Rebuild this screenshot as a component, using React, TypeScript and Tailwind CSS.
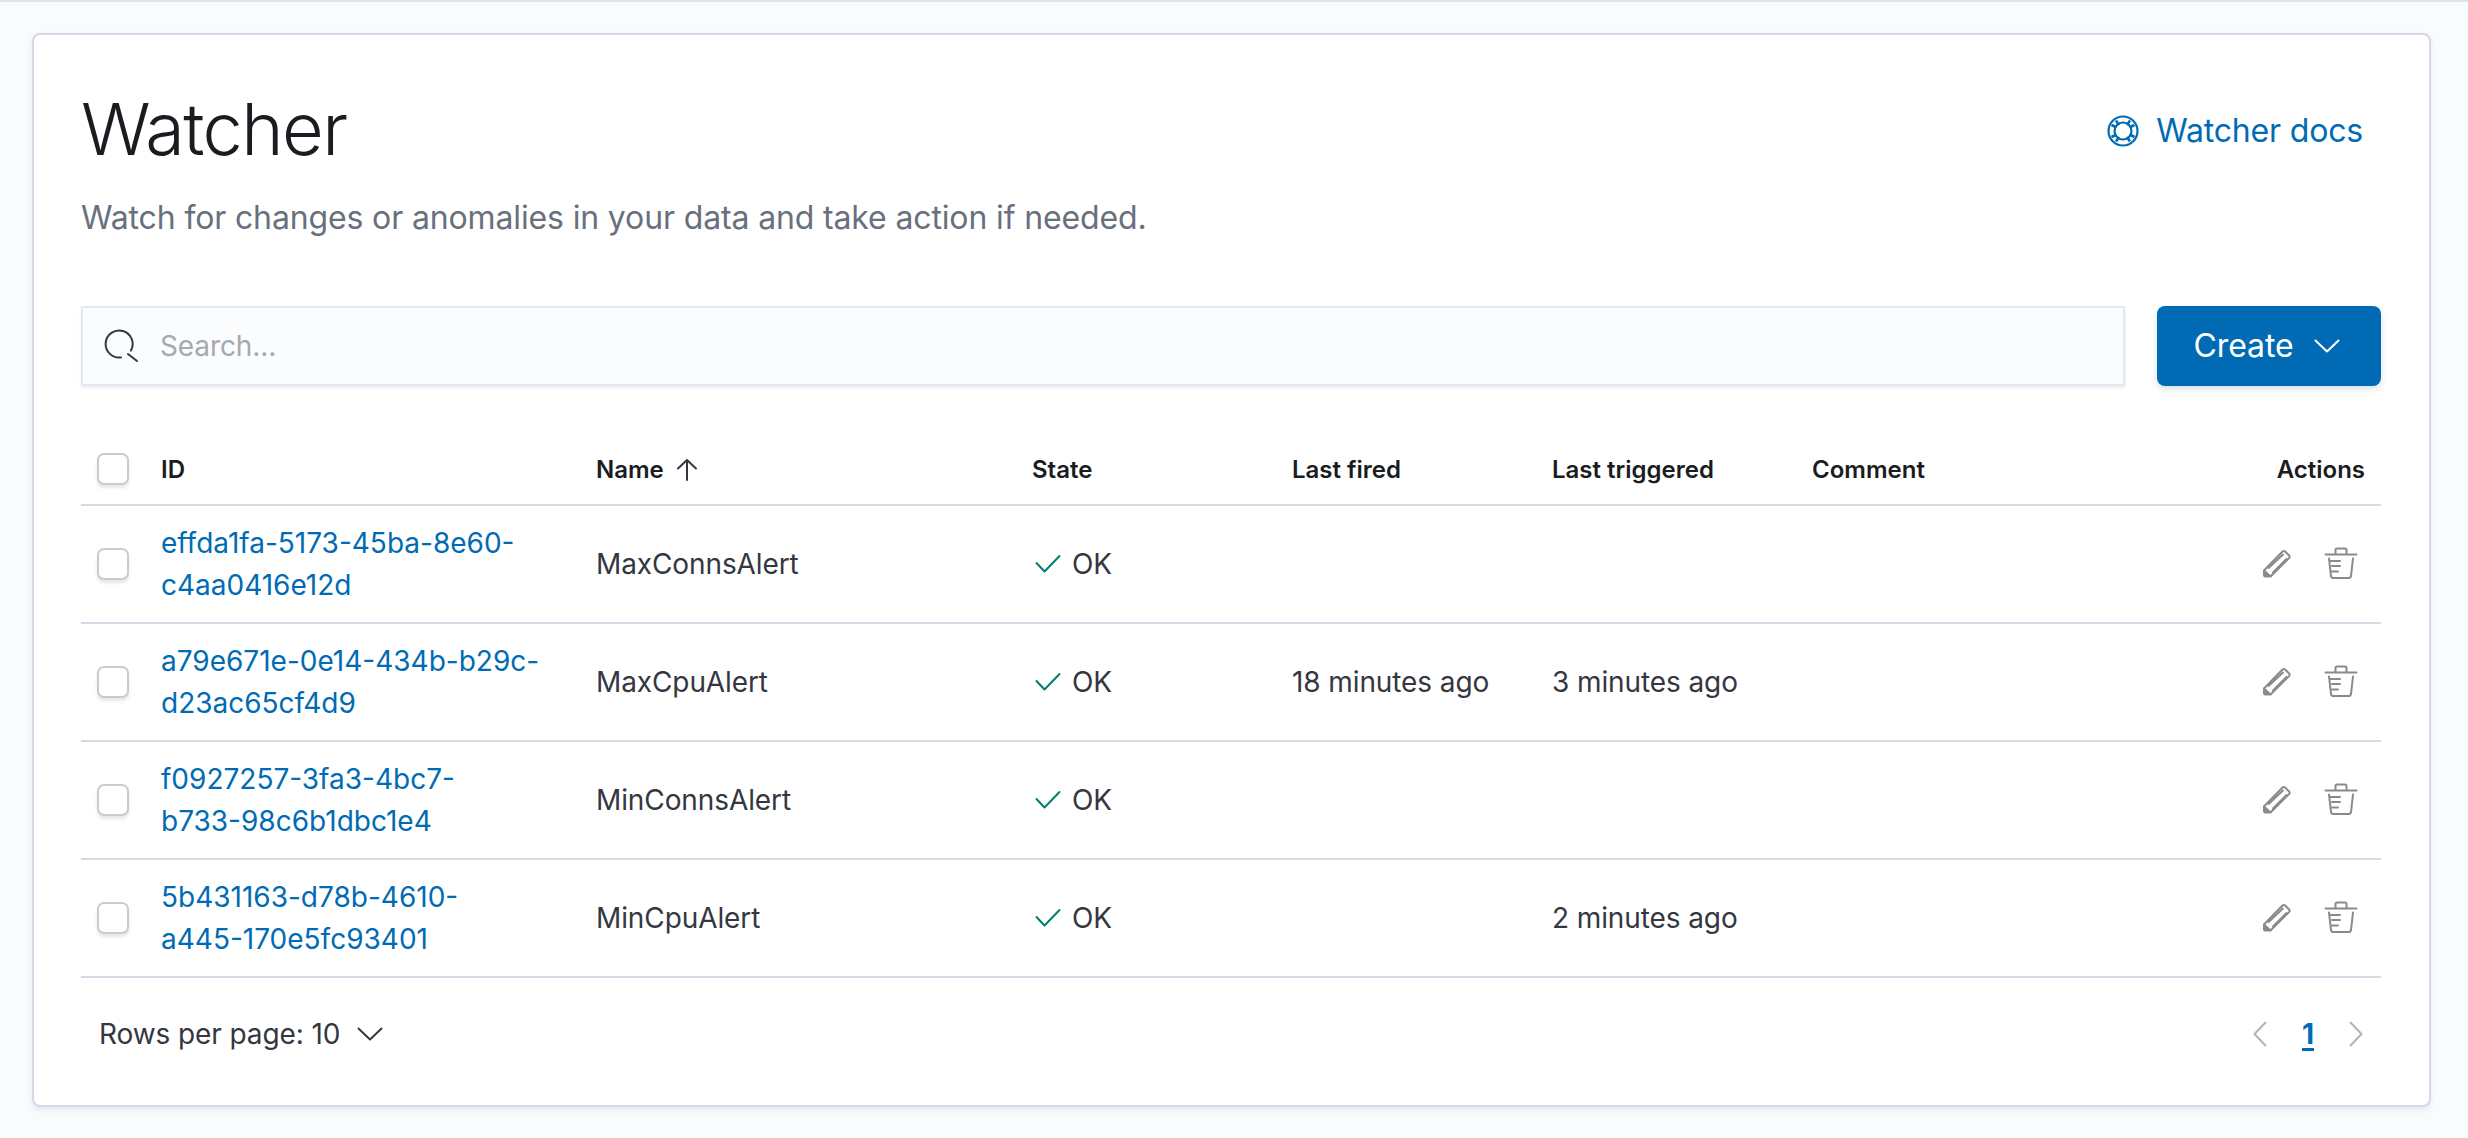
import { ReactNode } from 'react';

const watches = [
  { id: ['effda1fa-5173-45ba-8e60-', 'c4aa0416e12d'], name: 'MaxConnsAlert', fired: '', triggered: '' },
  { id: ['a79e671e-0e14-434b-b29c-', 'd23ac65cf4d9'], name: 'MaxCpuAlert', fired: '18 minutes ago', triggered: '3 minutes ago' },
  { id: ['f0927257-3fa3-4bc7-', 'b733-98c6b1dbc1e4'], name: 'MinConnsAlert', fired: '', triggered: '' },
  { id: ['5b431163-d78b-4610-', 'a445-170e5fc93401'], name: 'MinCpuAlert', fired: '', triggered: '2 minutes ago' },
];

function Chevron({ className }: { className?: string }) {
  return (
    <svg viewBox="0 0 26 16" className={className} fill="none" stroke="currentColor" strokeWidth="2" strokeLinecap="round" strokeLinejoin="round">
      <path d="M1.5 2.5 13 13.5 24.5 2.5" />
    </svg>
  );
}

function Checkbox() {
  return <div className="w-8 h-8 rounded-[7px] bg-white border-2 border-[#c9cbcd] shadow-[0_3px_3px_rgba(152,162,179,0.25)]" />;
}

function Cell({ className, children }: { className: string; children?: ReactNode }) {
  return <div className={`px-4 shrink-0 ${className}`}>{children}</div>;
}

function LifeBuoy() {
  return (
    <svg viewBox="0 0 32 32" className="w-8 h-8" fill="none" stroke="#006bb4" strokeWidth="2.2">
      <circle cx="16" cy="16" r="14.5" />
      <circle cx="16" cy="16" r="8.5" />
      <path strokeWidth="2.6" d="M9 5.5 12 10M23 5.5 20 10M9 26.5 12 22M23 26.5 20 22M4.5 10 9.5 12.5M27.5 10 22.5 12.5M4.5 22 9.5 19.5M27.5 22 22.5 19.5" />
    </svg>
  );
}

function SearchIcon() {
  return (
    <svg viewBox="0 0 34 34" className="w-[34px] h-[34px]" fill="none" stroke="#343741" strokeWidth="2" strokeLinecap="round">
      <path d="M17 28.400A13.500 13.500 0 1 1 27 21.500" />
      <path d="M24 25l9 7" />
    </svg>
  );
}

function Pencil() {
  return (
    <svg viewBox="0 0 30 30" className="w-[30px] h-[30px]" fill="none" stroke="#8a8a8a" strokeWidth="2" strokeLinejoin="round">
      <path d="M2 21.5 20.5 2.5a2 2 0 0 1 2.6 0l4 4a2 2 0 0 1 0 2.6L8.5 27.5" />
      <path d="M6 19.5 21.5 5M10.5 24 25 9.5" />
      <path fill="#8a8a8a" d="M2 21.5 8.5 27.5H3a1.5 1.5 0 0 1-1-1z" />
    </svg>
  );
}

function Trash() {
  return (
    <svg viewBox="0 0 34 34" className="w-[34px] h-[34px]" fill="none" stroke="#8a8a8a" strokeWidth="2" strokeLinecap="round">
      <path d="M1.5 7.5h31" />
      <path d="M11.5 7V3a1.5 1.5 0 0 1 1.5-1.5h8A1.5 1.5 0 0 1 22.500 3v4" />
      <path d="M5 11.500 7 29a2.500 2.500 0 0 0 2.500 2h15a2.500 2.500 0 0 0 2.500-2l2-17.500" />
      <path d="M6 14h10M8 19h8M8 24.500h6" />
    </svg>
  );
}

export default function App() {
  return (
    <div className="min-h-[1138px] bg-[#fafbfd] font-['Inter',sans-serif] text-[#343741] text-[28px] leading-[42px] tracking-[-0.1px] pt-[33px] px-8 border-t-2 border-[#dfe3ee]">
      <div className="-mt-[2px] w-[2399px] h-[1074px] bg-white border-2 border-[#d3dae6] rounded-lg shadow-[0_3px_6px_rgba(152,162,179,0.2)] pl-[47px] pr-[48px] pt-[46px]">
        <div className="flex items-start justify-between">
          <h1 className="text-[72px] leading-[96px] font-light text-[#1a1c21] tracking-[-1.6px]">Watcher</h1>
          <a className="flex items-center gap-[17px] text-[#006bb4] text-[32px] leading-[48px] tracking-[-0.17px] mt-[26px] mr-[18px]">
            <LifeBuoy />
            Watcher docs
          </a>
        </div>
        <p className="mt-[17px] text-[32px] leading-[48px] tracking-[-0.14px] text-[#69707d]">Watch for changes or anomalies in your data and take action if needed.</p>

        <div className="mt-[64px] flex gap-8 h-20">
          <div className="w-[2044px] bg-[#fbfcfd] border-2 border-[#e4e8f0] shadow-[0_2px_3px_rgba(152,162,179,0.2)] flex items-center pl-[21px] gap-[22px]">
            <SearchIcon />
            <span className="text-[#a5a9b0] text-[28px]">Search...</span>
          </div>
          <button className="w-[224px] bg-[#006bb4] rounded-lg text-white text-[32px] tracking-[-0.1px] flex items-center justify-center gap-5 pr-[5px] shadow-[0_3px_6px_rgba(152,162,179,0.35)]">
            Create
            <Chevron className="w-[26px] h-4" />
          </button>
        </div>

        <div className="mt-[48px] flex items-center h-[72px] pt-[2px] border-b-2 border-[#d3dae6] text-[#1a1c21] font-semibold text-[24px] tracking-normal">
          <div className="w-[64px] pl-4 shrink-0 -mt-[2px]"><Checkbox /></div>
          <Cell className="w-[435px]">ID</Cell>
          <Cell className="w-[436px] flex items-center gap-3">
            Name
            <svg viewBox="0 0 22 24" className="w-[22px] h-6" fill="none" stroke="#343741" strokeWidth="2" strokeLinecap="round" strokeLinejoin="round">
              <path d="M11 2v20M2 10.500 11 2l9 8.500" />
            </svg>
          </Cell>
          <Cell className="w-[260px]">State</Cell>
          <Cell className="w-[260px]">Last fired</Cell>
          <Cell className="w-[260px]">Last triggered</Cell>
          <Cell className="w-[259px]">Comment</Cell>
          <div className="flex-1 text-right pr-4">Actions</div>
        </div>

        {watches.map(w => (
          <div key={w.name} className="flex items-center h-[118px] border-b-2 border-[#d3dae6]">
            <div className="w-[64px] pl-4 shrink-0"><Checkbox /></div>
            <Cell className="w-[435px] text-[#006bb4] tracking-normal">
              <div>{w.id[0]}</div>
              <div>{w.id[1]}</div>
            </Cell>
            <Cell className="w-[436px]">{w.name}</Cell>
            <Cell className="w-[260px] flex items-center gap-[10px]">
              <svg viewBox="0 0 26 20" className="w-[28px] h-5 ml-[2px]" fill="none" stroke="#017d73" strokeWidth="2" strokeLinecap="round" strokeLinejoin="round">
                <path d="M1.500 9 9.500 17.500 24.500 2" />
              </svg>
              OK
            </Cell>
            <Cell className="w-[260px]">{w.fired}</Cell>
            <Cell className="w-[260px]">{w.triggered}</Cell>
            <Cell className="w-[259px]" />
            <div className="flex-1 flex items-center justify-end gap-[32px] pr-[23px]">
              <Pencil />
              <Trash />
            </div>
          </div>
        ))}

        <div className="flex items-center justify-between h-[112px]">
          <div className="flex items-center gap-[17px] pl-[18px]">
            Rows per page: 10
            <Chevron className="w-[26px] h-4" />
          </div>
          <div className="flex items-center text-[#b4b4b4]">
            <svg viewBox="0 0 14 26" className="w-[14px] h-[26px]" fill="none" stroke="currentColor" strokeWidth="2" strokeLinecap="round" strokeLinejoin="round">
              <path d="M12.500 1.500 1.500 13l11 11.500" />
            </svg>
            <span className="ml-[35px] mr-[35px] text-[#006bb4] font-bold underline underline-offset-4 decoration-[3px]">1</span>
            <svg viewBox="0 0 14 26" className="w-[14px] h-[26px] mr-[18px]" fill="none" stroke="currentColor" strokeWidth="2" strokeLinecap="round" strokeLinejoin="round">
              <path d="M1.500 1.500 12.500 13l-11 11.500" />
            </svg>
          </div>
        </div>
      </div>
    </div>
  );
}
